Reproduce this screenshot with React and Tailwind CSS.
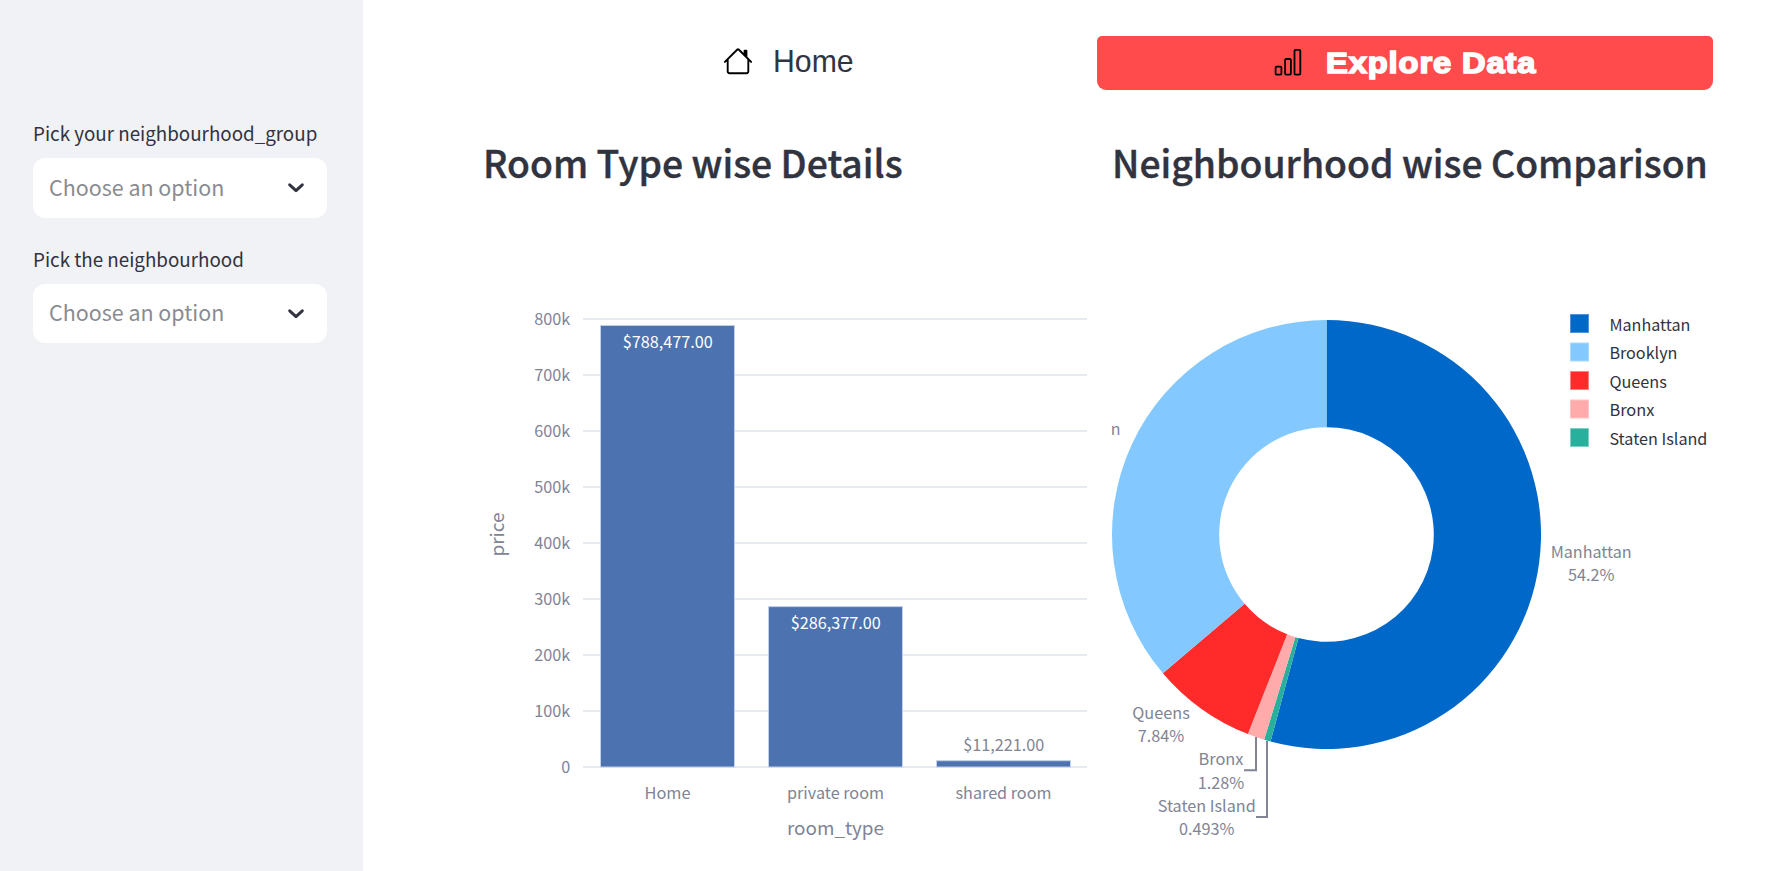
const INK = '#31333f';
const MUTED = '#808495';
const SOURCE = "font-['Noto_Sans_CJK_SC',sans-serif]";

function Select({ label, className, boxClassName, textClassName }) {
  return (
    <div className={className}>
      <div className="h-[30px] text-[18.8px] leading-[28px] whitespace-nowrap text-[#31333f]">{label}</div>
      <div className={`mt-[9px] flex items-center justify-between rounded-xl bg-white pr-[20px] pl-4 ${boxClassName}`}>
        <span className={`text-[21.45px] leading-[30px] text-[#898b92] ${textClassName}`}>Choose an option</span>
        <svg width="22" height="22" viewBox="0 0 22 22" fill="none">
          <path d="M4.7 7.8 L11 13.6 L17.3 7.8" stroke={INK} strokeWidth="3" strokeLinecap="round" strokeLinejoin="round" />
        </svg>
      </div>
    </div>
  );
}

// A line of chart text; w is its drawn width.
function T({ x, y, w, children, anchor = 'middle', size = 16, fill = MUTED, ...rest }) {
  return (
    <text x={x} y={y} textAnchor={anchor} fontSize={size} fill={fill} textLength={w} lengthAdjust="spacingAndGlyphs" {...rest}>
      {children}
    </text>
  );
}

const bars = [
  { name: 'Home', value: 788477, label: '$788,477.00', nameW: 46, y: 128, w: 90, fill: '#ffffff' },
  { name: 'private room', value: 286377, label: '$286,377.00', nameW: 97, y: 409, w: 90, fill: '#ffffff' },
  { name: 'shared room', value: 11221, label: '$11,221.00', nameW: 96, y: 531, w: 81, fill: MUTED },
];

function BarChart() {
  const ticks = [0, 1, 2, 3, 4, 5, 6, 7, 8];
  return (
    <svg width="604" height="651" viewBox="0 0 604 651" className="block overflow-visible">
      {ticks.map((t) => (
        <g key={t}>
          <rect x="99" y={546 - t * 56} width="504" height="2" fill="#e6eaf1" />
          <T x="86.2" y={552.6 - t * 56} w={t === 0 ? 9 : 36} anchor="end">{t === 0 ? '0' : `${t}00k`}</T>
        </g>
      ))}
      {bars.map((b, i) => {
        const h = (b.value / 800000) * 448;
        const cx = 183.5 + i * 168;
        return (
          <g key={b.name}>
            <rect x={cx - 67} y={547 - h} width="134" height={h} fill="#4c72b0" stroke="#c3d0e6" strokeWidth="1" />
            <T x={cx + 0.2} y={b.y} w={b.w} fill={b.fill}>{b.label}</T>
            <T x={cx} y="579" w={b.nameW}>{b.name}</T>
          </g>
        );
      })}
      <T x="351.5" y="615" w="97" size={18.6}>room_type</T>
      <T x="0" y="0" w="44" size={18.6} transform="translate(20 314.5) rotate(-90)">price</T>
    </svg>
  );
}

const slices = [
  { name: 'Manhattan', pct: 54.2, color: '#0068c9', w: 81, edge: '#4d95d9' },
  { name: 'Staten Island', pct: 0.493, color: '#29b09d', w: 98, edge: '#7fd0c4' },
  { name: 'Bronx', pct: 1.28, color: '#ffabab', w: 45, edge: '#ffc4c4' },
  { name: 'Queens', pct: 7.84, color: '#ff2b2b', w: 57.5, edge: '#ff8080' },
  { name: 'Brooklyn', pct: 36.187, color: '#83c9ff', w: 68, edge: '#a8d9ff' },
];
const legend = [
  { slice: 0, y: 111 },
  { slice: 4, y: 139 },
  { slice: 3, y: 168 },
  { slice: 2, y: 196 },
  { slice: 1, y: 225 },
];
const CX = 214.5;
const CY = 314.5;

function ring(from, to) {
  const R = 214.5;
  const r = 107.3;
  const p = (rad, f) => {
    const a = f * 2 * Math.PI;
    return `${(CX + rad * Math.sin(a)).toFixed(2)} ${(CY - rad * Math.cos(a)).toFixed(2)}`;
  };
  const large = to - from > 0.5 ? 1 : 0;
  return `M${p(R, from)} A${R} ${R} 0 ${large} 1 ${p(R, to)} L${p(r, to)} A${r} ${r} 0 ${large} 0 ${p(r, from)} Z`;
}

function PieChart() {
  let acc = 0;
  const paths = slices.map((s) => {
    const from = acc;
    acc += s.pct / 100;
    return <path key={s.name} d={ring(from, acc)} fill={s.color} />;
  });
  return (
    <svg width="602" height="651" viewBox="0 0 602 651" className="block overflow-visible">
      {paths}
      <path d="M144 517V550.3H132 M155 521V597H144" fill="none" stroke={MUTED} strokeWidth="2" />
      <T x="3.6" y="214.8">n</T>
      <T x="479.2" y="338" w="81">Manhattan</T>
      <T x="479.2" y="361" w="46.5">54.2%</T>
      <T x="49" y="499" w="57.5">Queens</T>
      <T x="49" y="522" w="46.5">7.84%</T>
      <T x="109" y="545" w="45">Bronx</T>
      <T x="109" y="569" w="46.5">1.28%</T>
      <T x="94.7" y="592" w="98">Staten Island</T>
      <T x="94.7" y="615" w="55.5">0.493%</T>
      {legend.map(({ slice, y }, i) => (
        <g key={slice}>
          <rect x="458.5" y={94.5 + i * 28.5} width="18" height="18" fill={slices[slice].color} stroke={slices[slice].edge} />
          <T x="497.4" y={y} w={slices[slice].w} anchor="start" fill={INK}>{slices[slice].name}</T>
        </g>
      ))}
    </svg>
  );
}

export default function App() {
  return (
    <div className={`flex h-[871px] w-full overflow-hidden bg-white ${SOURCE}`}>
      <aside className="w-[363px] shrink-0 bg-[#f0f2f6] pl-[33px]">
        <Select label="Pick your neighbourhood_group" className="mt-[119px] w-[294px]" boxClassName="h-[60px]" textClassName="pb-[2px]" />
        <Select label="Pick the neighbourhood" className="mt-[27px] w-[294px]" boxClassName="h-[59px]" textClassName="pb-[3px]" />
      </aside>
      <main className="flex flex-1 flex-col pt-9 pl-[118px]">
        <nav className="flex h-[54px] w-[1232px] font-['Liberation_Sans',Arial,sans-serif]">
          <div className="flex w-[616px] items-center pb-[3px] pl-[242px]">
            <svg width="30" height="30" viewBox="0 0 16 16" fill="currentColor" className="mb-px text-black">
              <path d="M8.707 1.5a1 1 0 0 0-1.414 0L.646 8.146a.5.5 0 0 0 .708.708L2 8.207V13.5A1.5 1.5 0 0 0 3.5 15h9a1.5 1.5 0 0 0 1.5-1.5V8.207l.646.647a.5.5 0 0 0 .708-.708L13 5.793V2.5a.5.5 0 0 0-.5-.5h-1a.5.5 0 0 0-.5.5v1.293zM13 7.207V13.5a.5.5 0 0 1-.5.5h-9a.5.5 0 0 1-.5-.5V7.207l5-5z" />
            </svg>
            <span className="ml-5 inline-block origin-left scale-x-[0.96] text-[31.5px] leading-[51px] text-[#31333f]">Home</span>
          </div>
          <div className="flex w-[616px] items-center rounded-t-[5px] rounded-b-[9px] bg-[#ff4b4b] pl-[176px]">
            <svg width="30" height="30" viewBox="0 0 30 30" fill="none" stroke="#000" strokeWidth="1.8">
              <rect x="2.6" y="18.6" width="5.8" height="8" rx="1" />
              <rect x="12.1" y="11" width="5.8" height="15.6" rx="1" />
              <rect x="21.5" y="1.9" width="5.8" height="24.7" rx="1" />
            </svg>
            <span className="ml-[23px] inline-block origin-left scale-x-[1.09] pb-px text-[30px] leading-[53px] font-bold tracking-[0.8px] whitespace-nowrap text-white [-webkit-text-stroke:1.6px_white]">
              Explore Data
            </span>
          </div>
        </nav>
        <div className="flex gap-6 pl-[3px]">
          <section className="w-[604px]">
            <h2 className="mt-[44px] -ml-px h-[56px] text-[37.35px] leading-[56px] font-medium whitespace-nowrap text-[#31333f] [-webkit-text-stroke:0.4px_#31333f]">
              Room Type wise Details
            </h2>
            <div className="mt-[30px]"><BarChart /></div>
          </section>
          <section className="w-[602px]">
            <h2 className="mt-[44px] h-[56px] text-[37.35px] leading-[56px] font-medium whitespace-nowrap text-[#31333f] [-webkit-text-stroke:0.4px_#31333f]">
              Neighbourhood wise Comparison
            </h2>
            <div className="mt-[30px]"><PieChart /></div>
          </section>
        </div>
      </main>
    </div>
  );
}
